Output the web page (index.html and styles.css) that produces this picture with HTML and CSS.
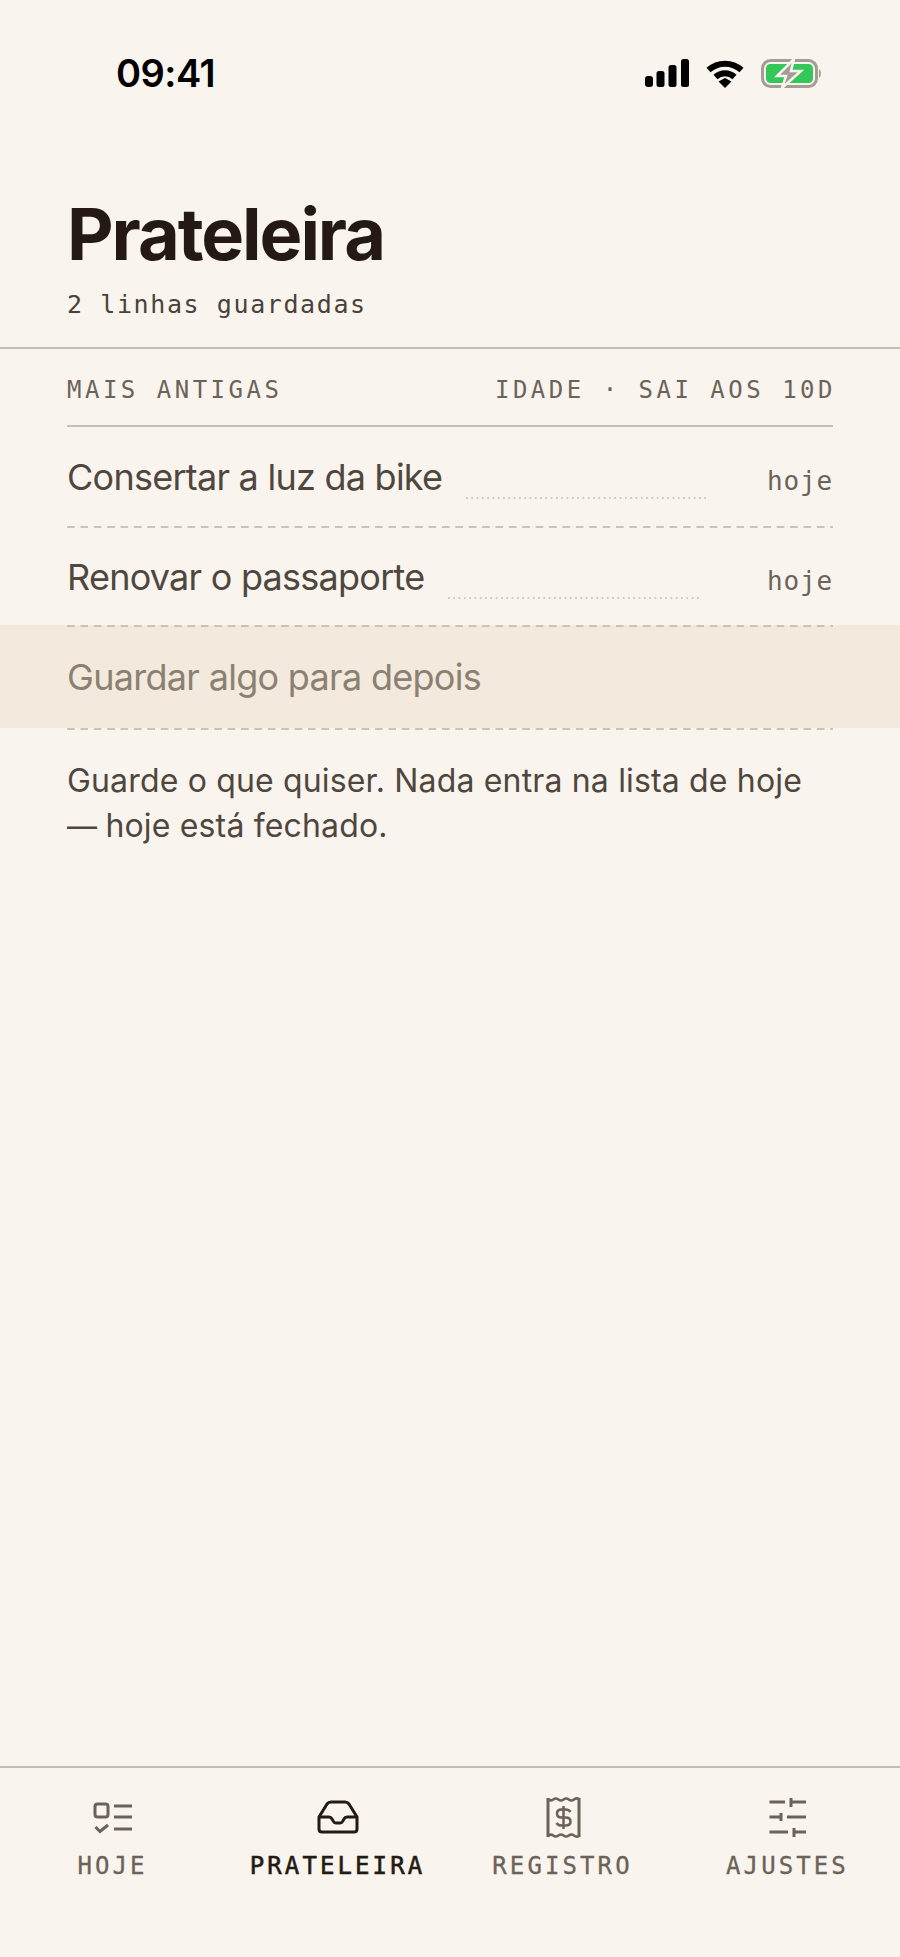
FILE: index.html
```html
<!DOCTYPE html>
<html lang="pt-BR">
<head>
  <meta charset="UTF-8" />
  <meta name="viewport" content="width=device-width, initial-scale=1.0"/>
  <title>Prateleira</title>
  <link rel="stylesheet" href="styles.css">
</head>
<body>
  <div class="app">
    <div class="statusbar">
      <div class="clock">09:41</div>
      <div class="status-icons">
        <svg class="signal" width="44" height="28" viewBox="0 0 44 28">
          <rect x="0" y="17" width="8" height="11" rx="3"/>
          <rect x="11.5" y="12" width="8" height="16" rx="2.5"/>
          <rect x="23.5" y="6" width="8" height="22" rx="2.5"/>
          <rect x="36" y="0" width="8" height="28" rx="2.5"/>
        </svg>
        <svg class="wifi" width="38" height="29" viewBox="0 0 38 29">
          <path d="M2.5 11 C12 2.5 26 2.5 35.5 11" />
          <path d="M9.5 18 C15 13 23 13 28.5 18" />
          <polygon class="wifi-dot" points="12.5,22.5 19,19 25.5,22.5 19,29"/>
        </svg>
        <svg class="battery" width="62" height="29" viewBox="0 0 62 29">
          <rect class="battery-shell" x="1.5" y="1.5" width="54" height="26" rx="8"/>
          <rect class="battery-fill" x="5" y="5" width="47" height="19" rx="4.5"/>
          <path class="battery-nub" d="M58 10 C60.500 11 60.500 18 58 19 Z"/>
          <polygon class="battery-bolt" points="33,0 16,17 25,17 21,29 40,12 30,12"/>
        </svg>
      </div>
    </div>

    <div class="page-head">
      <h1>Prateleira</h1>
      <p class="count">2 linhas guardadas</p>
    </div>

    <div class="shelf">
      <div class="shelf-head">
        <span>MAIS ANTIGAS</span>
        <span class="shelf-rule">IDADE · SAI AOS 10D</span>
      </div>
      <div class="row">
        <span class="row-name">Consertar a luz da bike</span>
        <span class="leader"></span>
        <span class="row-age">hoje</span>
      </div>
      <div class="row">
        <span class="row-name">Renovar o passaporte</span>
        <span class="leader leader-short"></span>
        <span class="row-age">hoje</span>
      </div>
    </div>

    <div class="add-row">
      <div class="add-text">Guardar algo para depois</div>
    </div>

    <p class="note">Guarde o que quiser. Nada entra na lista de hoje<br><span class="dash">— </span>hoje está fechado.</p>

    <div class="tabbar">
      <div class="tab">
        <svg width="44" height="44" viewBox="0 0 44 44">
          <rect x="4" y="9" width="13" height="13" rx="2.500"/>
          <path d="M23 11 H41 M23 22 H41 M23 34 H41"/>
          <path d="M4.500 32 L9 36.500 L17 30"/>
        </svg>
        <span>HOJE</span>
      </div>
      <div class="tab active">
        <svg width="44" height="44" viewBox="0 0 44 44">
          <path d="M3 22 L11 9 Q12.500 7 15 7 H29 Q31.500 7 33 9 L41 22 V34 Q41 37 38 37 H6 Q3 37 3 34 Z"/>
          <path d="M3 22 H13 Q15 22 16 24 L17.500 26.500 Q18.500 28 20 28 H24 Q25.500 28 26.500 26.500 L28 24 Q29 22 31 22 H41"/>
        </svg>
        <span>PRATELEIRA</span>
      </div>
      <div class="tab">
        <svg width="44" height="44" viewBox="0 0 44 44">
          <path d="M7 3 V42 M38 3 V42"/>
          <path class="thin" d="M7 4 Q9.600 6.500 12.200 4.500 T17.400 4.500 T22.600 4.500 T27.800 4.500 T33 4.500 T38 4 M7 41 Q9.600 38.500 12.200 40.500 T17.400 40.500 T22.600 40.500 T27.800 40.500 T33 40.500 T38 41"/>
          <path class="thin" d="M29.500 17 Q28 14.500 24.500 14.500 H20.500 Q16 14.500 16 18.500 Q16 22.500 20.500 22.500 H24.500 Q29.500 22.500 29.500 26.500 Q29.500 30.500 24.500 30.500 H20.500 Q17 30.500 15.500 28 M22.500 11 V34"/>
        </svg>
        <span>REGISTRO</span>
      </div>
      <div class="tab">
        <svg width="44" height="44" viewBox="0 0 44 44">
          <path d="M3.500 7 H19 M25 7 H40 M25 3 V12"/>
          <path d="M3.500 22 H15 M15 18 V26 M21 22 H40"/>
          <path d="M3.500 37 H22 M28 37 H40 M28 33 V42"/>
        </svg>
        <span>AJUSTES</span>
      </div>
    </div>
  </div>
</body>
</html>
```

FILE: styles.css
```css
* {
  box-sizing: border-box;
}

body {
  margin: 0;
  padding: 0;
  background-color: #f9f4ee;
  font-family: Inter, "Liberation Sans", sans-serif;
}

.app {
  display: flex;
  flex-direction: column;
  height: 1957px;
}

.statusbar {
  display: flex;
  justify-content: space-between;
  align-items: center;
  height: 58px;
  margin-top: 44px;
  padding: 0 77px 0 116px;
}

.clock {
  font-size: 38px;
  font-weight: 600;
  letter-spacing: -0.5px;
  color: #000;
}

.status-icons {
  display: flex;
  align-items: center;
  gap: 17px;
}

.signal {
  fill: #000;
}

.wifi path {
  fill: none;
  stroke: #000;
  stroke-width: 6;
}

.wifi-dot {
  fill: #000;
}

.battery-shell {
  fill: none;
  stroke: #a39d93;
  stroke-width: 3;
}

.battery-fill {
  fill: #34c759;
}

.battery-nub {
  fill: #a39d93;
}

.battery-bolt {
  fill: #a39d93;
  stroke: #f9f4ee;
  stroke-width: 2.5;
}

.page-head {
  padding: 92px 67px 0;
  height: 247px;
  border-bottom: 2px solid #c4beb3;
}

.page-head h1 {
  margin: 0;
  font-size: 72px;
  line-height: 80px;
  font-weight: 700;
  letter-spacing: -2.05px;
  color: #241a13;
}

.count {
  margin: 15px 0 0;
  font-family: "DejaVu Sans Mono", monospace;
  font-size: 25px;
  line-height: 32px;
  letter-spacing: 1.6px;
  color: #4a4239;
}

.shelf {
  padding: 0 67px;
}

.shelf-head {
  display: flex;
  justify-content: space-between;
  align-items: center;
  height: 78px;
  padding-top: 5px;
  border-bottom: 2px solid #c4beb3;
  font-family: "DejaVu Sans Mono", monospace;
  font-size: 24px;
  letter-spacing: 3.5px;
  color: #6b6258;
}

.shelf-rule {
  margin-right: -3px;
}

.row {
  display: flex;
  align-items: center;
  height: 101px;
  padding-bottom: 2px;
  background-image: linear-gradient(to right, #c9c3b8 8px, transparent 8px);
  background-size: 13.4px 2px;
  background-repeat: repeat-x;
  background-position: left bottom;
}

.row:last-child {
  height: 97px;
  padding-bottom: 0;
  background-image: none;
}

.row-name {
  font-size: 36px;
  letter-spacing: -0.75px;
  color: #4f473e;
}

.leader {
  flex: 1;
  height: 2px;
  margin: 42px 61px 0 24px;
  background-image: linear-gradient(to right, #cfc9bf 2px, transparent 2px);
  background-size: 5.300px 2px;
}

.leader-short {
  margin-right: 66px;
}

.row-age {
  margin-top: 8px;
  font-family: "DejaVu Sans Mono", monospace;
  font-size: 26px;
  letter-spacing: 0.85px;
  color: #6b6258;
}

.add-row {
  height: 103px;
  padding: 0 67px;
  background-color: #f3e9dc;
}

.add-text {
  height: 105px;
  line-height: 104px;
  font-size: 36px;
  letter-spacing: -0.7px;
  color: #8b8172;
  background-image: linear-gradient(to right, #c9c3b8 8px, transparent 8px), linear-gradient(to right, #c9c3b8 8px, transparent 8px);
  background-size: 13.4px 2px;
  background-repeat: repeat-x;
  background-position: left bottom, left top;
}

.note {
  flex: 1;
  margin: 0;
  padding: 30px 67px 0;
  font-size: 32px;
  line-height: 45px;
  letter-spacing: 0.16px;
  color: #4f473e;
}

.dash {
  font-size: 30px;
  letter-spacing: 0;
}

.tabbar {
  display: grid;
  grid-template-columns: repeat(4, 1fr);
  height: 191px;
  padding-top: 27px;
  border-top: 2px solid #c4beb3;
}

.tab {
  display: flex;
  flex-direction: column;
  align-items: center;
  gap: 13px;
  font-family: "DejaVu Sans Mono", monospace;
  font-size: 24px;
  letter-spacing: 3.1px;
  color: #6b6258;
  -webkit-text-stroke: 0.3px #6b6258;
}

.tab svg {
  fill: none;
  stroke: #6b6258;
  stroke-width: 3;
}

.tab svg .thin {
  stroke-width: 2.500;
}

.tab.active {
  color: #241a13;
  -webkit-text-stroke: 0.6px #241a13;
}

.tab.active svg {
  stroke: #241a13;
}
```
